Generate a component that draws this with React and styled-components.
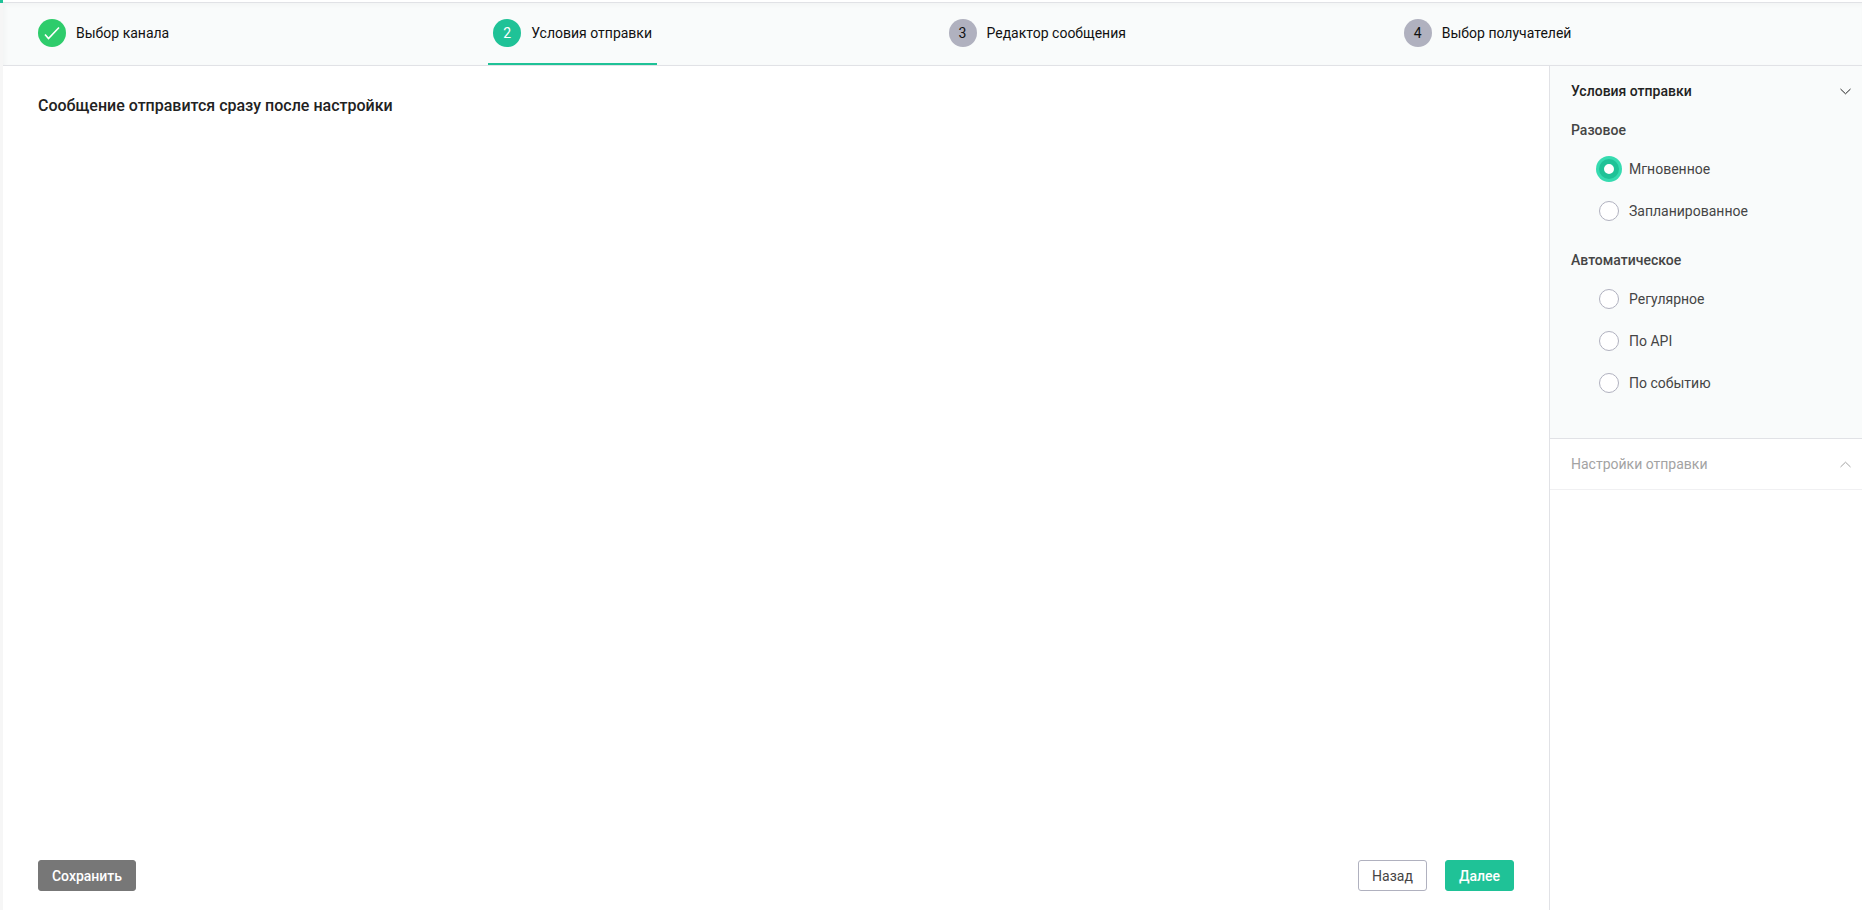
import React, { useState } from 'react'
import styled, { createGlobalStyle } from 'styled-components'

const GlobalStyle = createGlobalStyle`
  * {
    box-sizing: border-box;
  }
  body {
    margin: 0;
    background: #fff;
    color: #454545;
    font-family: Roboto, 'Noto Sans', sans-serif;
    font-size: 14px;
    line-height: 20px;
  }
  button, input {
    font: inherit;
  }
`

const Page = styled.div`
  display: flex;
  min-height: 100vh;
`

const Rail = styled.div`
  width: 3px;
  flex-shrink: 0;
  background: #f6f6f6;
  border-top: 3px solid #1fc297;
`

const Content = styled.div`
  display: flex;
  flex-direction: column;
  flex: 1;
  min-width: 0;
  padding-top: 2px;
`

const Steps = styled.ol`
  display: grid;
  grid-template-columns: repeat(4, 1fr);
  height: 64px;
  margin: 0;
  padding: 0 8px 0 30px;
  list-style: none;
  background: #f9fbfb;
  border-top: 1px solid #e1e2e6;
  border-bottom: 1px solid #e1e2e6;
  box-shadow: inset 2px 2px 4px rgba(0, 0, 0, 0.03);
`

const Step = styled.li`
  display: flex;
`

const StepLink = styled.a`
  display: flex;
  align-items: center;
  gap: 10px;
  padding: 0 5px;
  border-bottom: 2px solid ${(props) => (props.$active ? '#1fc297' : 'transparent')};
  color: #111;
  text-decoration: none;
  white-space: nowrap;
`

const stepColors = {
  done: '#2ecc6b',
  active: '#1fc297',
  next: '#b0b1bf',
}

const StepNumber = styled.span`
  display: flex;
  align-items: center;
  justify-content: center;
  width: 28px;
  height: 28px;
  border-radius: 50%;
  background: ${(props) => stepColors[props.$state]};
  color: ${(props) => (props.$state === 'next' ? '#111' : '#fff')};
`

const Body = styled.div`
  display: flex;
  flex: 1;
`

const Main = styled.main`
  display: flex;
  flex-direction: column;
  flex: 1;
  min-width: 0;
  padding: 28px 35px 19px;
`

const H1 = styled.h1`
  margin: 0;
  color: #222;
  font-size: 16px;
  line-height: 24px;
  font-weight: 500;
`

const Footer = styled.footer`
  display: flex;
  gap: 18px;
  margin-top: auto;
`

const buttonColors = {
  gray: { background: '#777', border: '#777', color: '#fff' },
  outline: { background: '#fff', border: '#b0b1bf', color: '#454545' },
  green: { background: '#1fc297', border: '#1fc297', color: '#fff' },
}

const Button = styled.button`
  height: 31px;
  padding: 0 12px;
  min-width: ${(props) => (props.$wide ? '98px' : '69px')};
  margin-right: ${(props) => (props.$wide ? 'auto' : '0')};
  border: 1px solid ${(props) => buttonColors[props.$kind].border};
  border-radius: 3px;
  background: ${(props) => buttonColors[props.$kind].background};
  color: ${(props) => buttonColors[props.$kind].color};
  font-weight: ${(props) => (props.$kind === 'outline' ? 400 : 500)};
  cursor: pointer;
`

const Sidebar = styled.aside`
  width: 313px;
  flex-shrink: 0;
  border-left: 1px solid #e1e2e6;
`

const Section = styled.section`
  background: ${(props) => (props.$open ? '#f9fbfb' : '#fff')};
  border-bottom: 1px solid ${(props) => (props.$open ? '#e1e2e6' : '#f0f0f2')};
  padding-bottom: ${(props) => (props.$open ? '20px' : '0')};
`

const SectionToggle = styled.button`
  display: flex;
  align-items: center;
  justify-content: space-between;
  width: 100%;
  height: 50px;
  padding: 0 11px 0 21px;
  border: 0;
  background: none;
  color: ${(props) => (props.$open ? '#222' : '#a3a3a3')};
  font-weight: ${(props) => (props.$open ? 500 : 400)};
  cursor: pointer;
`

const Group = styled.fieldset`
  margin: 0;
  padding: 0 21px 14px;
  border: 0;
`

const Legend = styled.legend`
  padding: 4px 0 8px;
  font-weight: 500;
`

const Option = styled.label`
  display: flex;
  align-items: center;
  gap: 10px;
  height: 42px;
  padding-left: 28px;
  cursor: pointer;
`

const Radio = styled.input`
  appearance: none;
  width: 20px;
  height: 20px;
  margin: 0;
  border: 1px solid #b0b1bf;
  border-radius: 50%;
  background: #fff;

  &:checked {
    border: 5px solid #1fc297;
    box-shadow: 0 0 0 3px #36dbb0;
  }
`

const CheckIcon = () => (
  <svg width="16" height="14" viewBox="0 0 16 14" fill="none" stroke="#fff" strokeWidth="1.6">
    <path d="M1 8.5 4.5 12.5 15 1.5" />
  </svg>
)

const Chevron = ({ up }) => (
  <svg width="11" height="7" viewBox="0 0 11 7" fill="none" stroke="currentColor" strokeWidth="1">
    <path d={up ? 'M.5 6 5.5 1.2 10.5 6' : 'M.5 1 5.5 5.8 10.5 1'} />
  </svg>
)

const steps = [
  { title: 'Выбор канала', state: 'done' },
  { title: 'Условия отправки', state: 'active' },
  { title: 'Редактор сообщения', state: 'next' },
  { title: 'Выбор получателей', state: 'next' },
]

const groups = [
  { title: 'Разовое', options: ['Мгновенное', 'Запланированное'] },
  { title: 'Автоматическое', options: ['Регулярное', 'По API', 'По событию'] },
]

const App = () => {
  const [selected, setSelected] = useState('Мгновенное')

  return (
    <Page>
      <GlobalStyle />
      <Rail />
      <Content>
        <Steps>
          {steps.map(({ title, state }, index) => (
            <Step key={title}>
              <StepLink href="#" $active={state === 'active'}>
                <StepNumber $state={state}>
                  {state === 'done' ? <CheckIcon /> : index + 1}
                </StepNumber>
                {title}
              </StepLink>
            </Step>
          ))}
        </Steps>
        <Body>
          <Main>
            <H1>Сообщение отправится сразу после настройки</H1>
            <Footer>
              <Button type="button" $kind="gray" $wide>
                Сохранить
              </Button>
              <Button type="button" $kind="outline">
                Назад
              </Button>
              <Button type="button" $kind="green">
                Далее
              </Button>
            </Footer>
          </Main>
          <Sidebar>
            <Section $open>
              <SectionToggle type="button" $open aria-expanded="true">
                Условия отправки
                <Chevron />
              </SectionToggle>
              {groups.map((group) => (
                <Group key={group.title}>
                  <Legend>{group.title}</Legend>
                  {group.options.map((option) => (
                    <Option key={option}>
                      <Radio
                        type="radio"
                        name="condition"
                        value={option}
                        checked={selected === option}
                        onChange={() => setSelected(option)}
                      />
                      {option}
                    </Option>
                  ))}
                </Group>
              ))}
            </Section>
            <Section>
              <SectionToggle type="button" aria-expanded="false">
                Настройки отправки
                <Chevron up />
              </SectionToggle>
            </Section>
          </Sidebar>
        </Body>
      </Content>
    </Page>
  )
}

export default App
